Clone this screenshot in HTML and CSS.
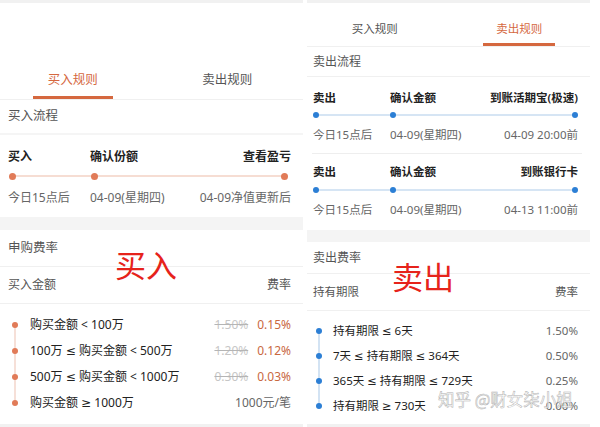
FILE: index.html
```html
<!DOCTYPE html>
<html lang="zh-CN">
<head>
<meta charset="utf-8">
<title>买入规则 / 卖出规则</title>
<link rel="stylesheet" href="styles.css">
</head>
<body>
<div class="page">
  <section class="panel buy">
    <div class="topline"></div>
    <div class="blank"></div>
    <nav class="tabs">
      <div class="tab"><span class="tab-label active">买入规则</span></div>
      <div class="tab"><span class="tab-label">卖出规则</span></div>
    </nav>
    <div class="sec-title flow-title">买入流程</div>
    <div class="flow">
      <div class="flow-row labels"><span>买入</span><span>确认份额</span><span class="end">查看盈亏</span></div>
      <div class="flow-row dots"><i></i><i></i><i class="end"></i></div>
      <div class="flow-row dates"><span>今日15点后</span><span>04-09(星期四)</span><span class="end">04-09净值更新后</span></div>
    </div>
    <div class="band"></div>
    <div class="sec-title fee-title">申购费率</div>
    <div class="table-head"><span>买入金额</span><span>费率</span></div>
    <ul class="rates">
      <li><i></i><span class="cond">购买金额 &lt; 100万</span><span class="val"><s>1.50%</s><b>0.15%</b></span></li>
      <li><i></i><span class="cond">100万 ≤ 购买金额 &lt; 500万</span><span class="val"><s>1.20%</s><b>0.12%</b></span></li>
      <li><i></i><span class="cond">500万 ≤ 购买金额 &lt; 1000万</span><span class="val"><s>0.30%</s><b>0.03%</b></span></li>
      <li><i></i><span class="cond">购买金额 ≥ 1000万</span><span class="val plain">1000元/笔</span></li>
    </ul>
    <div class="bottomline"></div>
    <div class="stamp">买入</div>
  </section>

  <section class="panel sell">
    <div class="topline"></div>
    <nav class="tabs">
      <div class="tab"><span class="tab-label">买入规则</span></div>
      <div class="tab"><span class="tab-label active">卖出规则</span></div>
    </nav>
    <div class="sec-title flow-title">卖出流程</div>
    <div class="flow first">
      <div class="flow-row labels"><span>卖出</span><span>确认金额</span><span class="end">到账活期宝(极速)</span></div>
      <div class="flow-row dots"><i></i><i></i><i class="end"></i></div>
      <div class="flow-row dates"><span>今日15点后</span><span>04-09(星期四)</span><span class="end">04-09 20:00前</span></div>
    </div>
    <div class="flow second">
      <div class="flow-row labels"><span>卖出</span><span>确认金额</span><span class="end">到账银行卡</span></div>
      <div class="flow-row dots"><i></i><i></i><i class="end"></i></div>
      <div class="flow-row dates"><span>今日15点后</span><span>04-09(星期四)</span><span class="end">04-13 11:00前</span></div>
    </div>
    <div class="band"></div>
    <div class="sec-title fee-title">卖出费率</div>
    <div class="table-head"><span>持有期限</span><span>费率</span></div>
    <ul class="rates">
      <li><i></i><span class="cond">持有期限 ≤ 6天</span><span class="val plain">1.50%</span></li>
      <li><i></i><span class="cond">7天 ≤ 持有期限 ≤ 364天</span><span class="val plain">0.50%</span></li>
      <li><i></i><span class="cond">365天 ≤ 持有期限 ≤ 729天</span><span class="val plain">0.25%</span></li>
      <li><i></i><span class="cond">持有期限 ≥ 730天</span><span class="val plain">0.00%</span></li>
    </ul>
    <div class="bottomline"></div>
    <div class="stamp">卖出</div>
    <div class="watermark">知乎 @财女柒小姐</div>
  </section>
</div>
</body>
</html>
```

FILE: styles.css
```css
* { box-sizing: border-box; }

body {
  margin: 0;
  background: #fff;
  font-family: "Noto Sans", "DejaVu Sans", "Noto Sans CJK SC", sans-serif;
  color: #222;
}

.page {
  display: flex;
  gap: 4px;
  width: 600px;
  height: 427px;
  overflow: hidden;
}

.panel {
  position: relative;
  display: flex;
  flex-direction: column;
  flex: none;
}

.buy { width: 303px; }
.sell { width: 283px; }

.topline { height: 3px; background: #f1f1f1; }
.bottomline { height: 3px; background: #f1f1f1; }
.band { background: #f4f4f4; }

.buy .blank { height: 58px; }

/* tabs */
.tabs {
  display: flex;
  border-bottom: 1px solid #f0f0f0;
}
.buy .tabs { height: 39px; }
.sell .tabs { height: 44px; }

.tab {
  flex: 1;
  display: flex;
  justify-content: center;
}

.tab-label {
  display: flex;
  align-items: center;
  border-bottom: 3px solid transparent;
  color: #555;
  line-height: 1;
}
.buy .tab-label { padding: 3px 15px 0; font-size: 12.5px; }
.sell .tab-label { padding: 12px 13px 0; font-size: 11.5px; }
.tab:first-child .tab-label { margin-right: 6px; }

.tab-label.active {
  color: #d5683f;
  border-bottom-color: #d5683f;
}

/* section titles */
.sec-title {
  display: flex;
  align-items: center;
  color: #555;
  line-height: 1;
}
.buy .sec-title { padding-left: 8px; font-size: 12.5px; }
.sell .sec-title { padding-left: 6px; font-size: 12px; }

.buy .flow-title { height: 35px; border-bottom: 2px solid #f5f5f5; }
.sell .flow-title { height: 30px; border-bottom: 1px solid #f0f0f0; }
.buy .fee-title { height: 37px; border-bottom: 1px solid #f0f0f0; }
.sell .fee-title { height: 32px; border-bottom: 1px solid #f0f0f0; }

/* flows */
.flow-row {
  display: grid;
  align-items: center;
}
.flow-row .end { justify-self: end; }
.buy .flow-row { grid-template-columns: 82px 1fr auto; }
.sell .flow-row { grid-template-columns: 77px 1fr auto; }

.labels, .dates { height: 20px; line-height: 1; white-space: nowrap; }
.labels { font-weight: 600; color: #222; }
.dates { color: #666; }

.buy .flow { padding: 12px 12px 9px 8px; }
.buy .labels, .buy .dates { font-size: 12px; }
.buy .dots { margin-top: 4px; }
.buy .dates { margin-top: 7px; }

.sell .labels, .sell .dates { font-size: 11.5px; }
.sell .flow.first {
  margin: 0 8px 0 5px;
  padding: 11px 4px 8px 1px;
  border-bottom: 1px solid #eee;
}
.sell .flow.second { padding: 8px 12px 10px 6px; }
.sell .first .dots { margin-top: 2px; }
.sell .second .dots { margin-top: 3px; }
.sell .dates { margin-top: 5px; }

.dots {
  height: 10px;
  background-repeat: no-repeat;
  background-position: 4px center;
  background-size: calc(100% - 8px) 2px;
}
.dots i {
  display: block;
  border-radius: 50%;
}
.buy .dots { background-image: linear-gradient(#f6ddd3, #f6ddd3); }
.buy .dots i { width: 7px; height: 7px; background: #e17b58; margin-left: 1px; }
.buy .dots i.end { margin-left: 0; margin-right: 3px; }
.sell .dots { background-image: linear-gradient(#d6e5f4, #d6e5f4); }
.sell .dots i { width: 6px; height: 6px; background: #2c7fd5; }

.buy .band { height: 13px; }
.sell .band { height: 12px; }

/* table head */
.table-head {
  height: 37px;
  display: flex;
  align-items: center;
  justify-content: space-between;
  border-bottom: 1px solid #f0f0f0;
  color: #555;
  line-height: 1;
}
.buy .table-head { padding: 0 12px 0 8px; font-size: 12px; }
.sell .table-head { padding: 0 12px 0 6px; font-size: 11.5px; }

/* rate lists */
.rates {
  list-style: none;
  margin: 0;
  background-repeat: no-repeat;
}
.rates li {
  display: flex;
  align-items: center;
  white-space: nowrap;
  line-height: 1;
}
.rates li i {
  display: block;
  flex: none;
  border-radius: 50%;
}
.rates .cond { flex: 1; }
.rates .val { display: flex; gap: 9px; }
.rates s { color: #c6c6c6; text-decoration-color: #b5b5b5; }
.rates b { font-weight: 400; color: #c9683f; }
.rates .plain { color: #666; }

.buy .rates {
  padding: 8px 12px 8px 8px;
  font-size: 12px;
  background-image: linear-gradient(#f6e0d8, #f6e0d8);
  background-size: 2px 78px;
  background-position: 14px 21px;
}
.buy .rates li { height: 26px; }
.buy .rates li i { width: 6px; height: 6px; background: #e17b58; margin: 0 12px 0 4px; }

.sell .rates {
  padding: 7px 12px 6px 6px;
  font-size: 11.5px;
  background-image: linear-gradient(#d3e3f3, #d3e3f3);
  background-size: 2px 75px;
  background-position: 11px 20px;
}
.sell .rates li { height: 25px; }
.sell .rates li i { width: 6px; height: 6px; background: #2c7fd5; margin: 0 11px 0 3px; }

/* overlays */
.stamp {
  position: absolute;
  font-family: "Noto Sans CJK SC", sans-serif;
  font-size: 31px;
  line-height: 1;
  color: #e6231b;
}
.buy .stamp { left: 115px; top: 248px; }
.sell .stamp { left: 85px; top: 260px; }

.watermark {
  position: absolute;
  left: 131px;
  top: 391px;
  font-family: "Noto Sans CJK SC", sans-serif;
  font-size: 16.5px;
  line-height: 1;
  color: rgba(255, 255, 255, 0.8);
  -webkit-text-stroke: 0.5px #b0b0b0;
  white-space: nowrap;
}
```
